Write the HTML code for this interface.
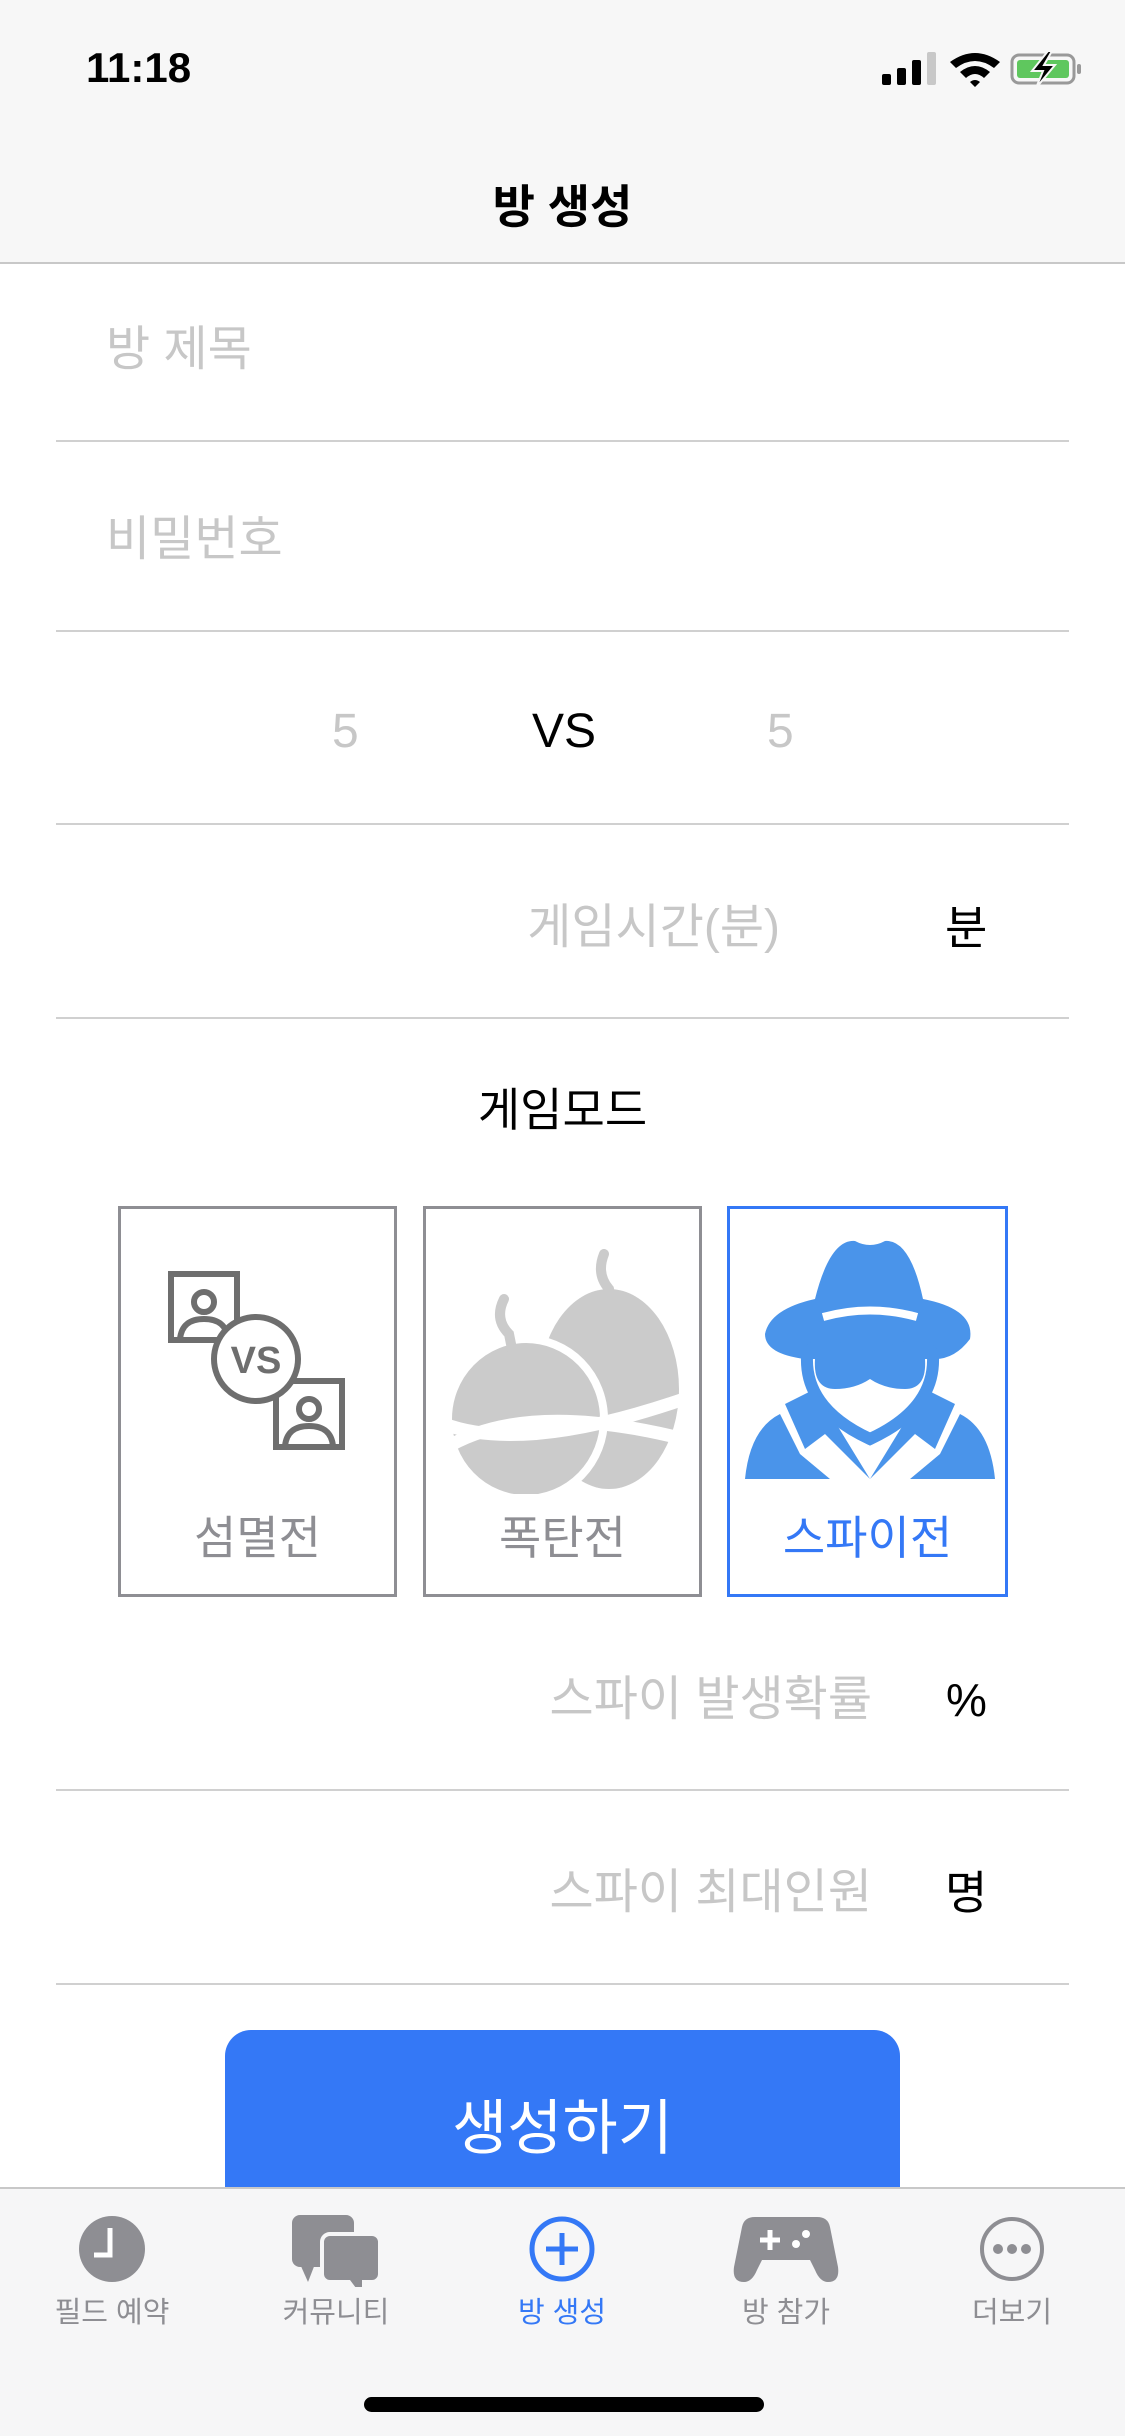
<!DOCTYPE html>
<html><head><meta charset="utf-8"><style>
*{margin:0;padding:0;box-sizing:border-box}
body{width:1125px;height:2436px;background:#fff;position:relative;overflow:hidden;font-family:"Liberation Sans","Noto Sans CJK KR",sans-serif}
.a{position:absolute}
.line{position:absolute;left:56px;width:1013px;height:2px;background:#d0d0d0}
.ph{color:#c7c7c7;font-size:48px;line-height:60px}
.box{position:absolute;top:1206px;height:391px;border:3px solid #8e8e93;background:#fff}
.lab{position:absolute;left:0;right:0;top:293px;text-align:center;font-size:46px;color:#8e8e93}
.tl{position:absolute;top:2289px;width:200px;text-align:center;font-size:29px;color:#8e8e93}
</style></head><body>
<div class="a" style="left:0;top:0;width:1125px;height:264px;background:#f7f7f7;border-bottom:2px solid #c8c8c8"></div>
<div class="a" style="left:86px;top:44px;font-size:42px;font-weight:bold;color:#000">11:18</div>
<svg class="a" style="left:880px;top:50px" width="210" height="40" viewBox="0 0 210 40">
<rect x="2" y="24" width="9" height="11" rx="2"/><rect x="17" y="18" width="9" height="17" rx="2"/><rect x="32" y="10" width="9" height="25" rx="2"/><rect x="47" y="2" width="9" height="33" rx="2" fill="#c8c8c8"/>
<path d="M70 12 Q95 -6 120 12 L114 18 Q95 4 76 18Z M80 22 Q95 10 110 22 L104 28 Q95 20 86 28Z M90 32 L95 37 L100 32 Q95 28 90 32Z"/>
<rect x="132" y="5" width="62" height="28" rx="7" fill="none" stroke="#999" stroke-width="3"/>
<rect x="137" y="10" width="52" height="18" rx="3" fill="#5fc75e"/>
<rect x="197" y="14" width="4" height="10" rx="2" fill="#999"/>
<path d="M168 1 L152 21 L163 21 L156 38 L175 15 L164 15 L172 1Z" fill="#000" stroke="#f7f7f7" stroke-width="2"/>
</svg>
<div class="a" style="left:0;width:1125px;top:171px;text-align:center;font-size:46px;font-weight:bold;color:#000">방 생성</div>

<div class="a ph" style="left:106px;top:320px">방 제목</div>
<div class="line" style="top:440px"></div>
<div class="a ph" style="left:106px;top:510px">비밀번호</div>
<div class="line" style="top:630px"></div>
<div class="a ph" style="left:332px;top:702px">5</div>
<div class="a" style="left:532px;top:702px;font-size:48px;line-height:60px;color:#000">VS</div>
<div class="a ph" style="left:767px;top:702px">5</div>
<div class="line" style="top:823px"></div>
<div class="a ph" style="right:345px;top:898px">게임시간(분)</div>
<div class="a" style="left:945px;top:898px;font-size:46px;line-height:60px">분</div>
<div class="line" style="top:1017px"></div>
<div class="a" style="left:0;width:1125px;top:1080px;text-align:center;font-size:46px;line-height:60px">게임모드</div>

<div class="box" style="left:118px;width:279px">
<svg class="a" style="left:45px;top:60px" width="185" height="190" viewBox="0 0 185 190" fill="none" stroke="#6e6e6e" stroke-width="6">
<rect x="5" y="5" width="66" height="66"/><circle cx="38" cy="33" r="10"/><path d="M14 70 Q16 50 38 50 Q60 50 62 70"/>
<rect x="110" y="112" width="66" height="66"/><circle cx="143" cy="140" r="10"/><path d="M119 177 Q121 157 143 157 Q165 157 167 177"/>
<circle cx="90" cy="90" r="42" fill="#fff"/>
<text x="90" y="104" font-family="Liberation Sans" font-size="38" font-weight="bold" fill="#6e6e6e" stroke="none" text-anchor="middle">VS</text>
</svg>
<div class="lab">섬멸전</div></div>

<div class="box" style="left:423px;width:279px">
<svg class="a" style="left:18px;top:40px" width="245" height="245" viewBox="0 0 245 245">
<ellipse cx="165" cy="140" rx="70" ry="100" fill="#cbcbcb"/>
<ellipse cx="82" cy="170" rx="78" ry="80" fill="#cbcbcb" stroke="#fff" stroke-width="8"/>
<path d="M60 50 Q50 70 65 85 L68 100" stroke="#cbcbcb" stroke-width="10" fill="none" stroke-linecap="round"/>
<path d="M160 5 Q152 25 165 40 L168 55" stroke="#cbcbcb" stroke-width="10" fill="none" stroke-linecap="round"/>
<path d="M0 175 Q80 205 240 150" stroke="#fff" stroke-width="13" fill="none"/>
<path d="M0 200 Q80 150 240 190" stroke="#fff" stroke-width="13" fill="none"/>
</svg>
<div class="lab">폭탄전</div></div>

<div class="box" style="left:727px;width:281px;border-color:#3478f6">
<svg class="a" style="left:15px;top:30px" width="250" height="245" viewBox="0 0 250 245" fill="#4a94ea">
<path d="M70 60 Q85 0 110 2 Q125 10 140 2 Q165 0 178 60 Q230 70 225 100 Q210 120 190 120 L60 120 Q20 115 20 95 Q25 70 70 60Z"/>
<path d="M78 78 Q125 65 172 78" stroke="#fff" stroke-width="8" fill="none"/>
<path d="M62 118 Q65 95 125 120 Q185 95 188 118 Q190 170 125 200 Q60 170 62 118Z" fill="none" stroke="#4a94ea" stroke-width="12"/>
<path d="M70 120 L180 120 Q182 150 160 150 Q140 150 125 140 Q110 150 90 150 Q68 150 70 120Z"/>
<path d="M40 165 L70 150 L125 240 L180 150 L210 165 L190 210 L170 195 L125 240 L80 195 L60 210Z"/>
<path d="M0 240 Q5 190 35 175 L55 215 L85 240Z M250 240 Q245 190 215 175 L195 215 L165 240Z"/>
</svg>
<div class="lab" style="color:#3478f6">스파이전</div></div>

<div class="a ph" style="right:253px;top:1670px">스파이 발생확률</div>
<div class="a" style="left:946px;top:1670px;font-size:46px;line-height:60px">%</div>
<div class="line" style="top:1789px"></div>
<div class="a ph" style="right:253px;top:1863px">스파이 최대인원</div>
<div class="a" style="left:945px;top:1863px;font-size:46px;line-height:60px">명</div>
<div class="line" style="top:1983px"></div>

<div class="a" style="left:225px;top:2030px;width:675px;height:180px;background:#3478f6;border-radius:26px 26px 0 0;color:#fff;font-size:60px;text-align:center;padding-top:50px">생성하기</div>

<div class="a" style="left:0;top:2187px;width:1125px;height:249px;background:#f6f6f7;border-top:2px solid #c8c8c8"></div>
<svg class="a" style="left:0;top:2212px" width="1125" height="75" viewBox="0 0 1125 75">
<circle cx="112" cy="37" r="33" fill="#8e8e93"/><path d="M110 16 V43 H94" stroke="#fff" stroke-width="5" fill="none"/>
<rect x="292" y="3" width="62" height="52" rx="8" fill="#8e8e93"/><path d="M300 52 L308 70 L315 52Z" fill="#8e8e93"/>
<rect x="322" y="22" width="58" height="48" rx="8" fill="#8e8e93" stroke="#f6f6f7" stroke-width="4"/><path d="M350 68 L362 84 L362 66Z" fill="#8e8e93"/>
<circle cx="562" cy="37" r="30" fill="none" stroke="#3478f6" stroke-width="5"/><path d="M562 21 V53 M546 37 H578" stroke="#3478f6" stroke-width="5"/>
<path d="M755 5 L817 5 Q828 5 830 15 L838 55 Q840 70 828 70 Q820 70 815 58 L810 48 L762 48 L757 58 Q752 70 744 70 Q732 70 734 55 L742 15 Q744 5 755 5Z" fill="#8e8e93"/>
<path d="M770 18 V38 M760 28 H780" stroke="#fff" stroke-width="5"/><circle cx="796" cy="32" r="4" fill="#fff"/><circle cx="806" cy="22" r="4" fill="#fff"/>
<circle cx="1012" cy="37" r="30" fill="none" stroke="#8e8e93" stroke-width="4"/><circle cx="998" cy="37" r="5" fill="#8e8e93"/><circle cx="1012" cy="37" r="5" fill="#8e8e93"/><circle cx="1026" cy="37" r="5" fill="#8e8e93"/>
</svg>
<div class="tl" style="left:12px">필드 예약</div>
<div class="tl" style="left:236px">커뮤니티</div>
<div class="tl" style="left:462px;color:#3478f6">방 생성</div>
<div class="tl" style="left:686px">방 참가</div>
<div class="tl" style="left:912px">더보기</div>
<div class="a" style="left:364px;top:2397px;width:400px;height:15px;border-radius:8px;background:#000"></div>
</body></html>
